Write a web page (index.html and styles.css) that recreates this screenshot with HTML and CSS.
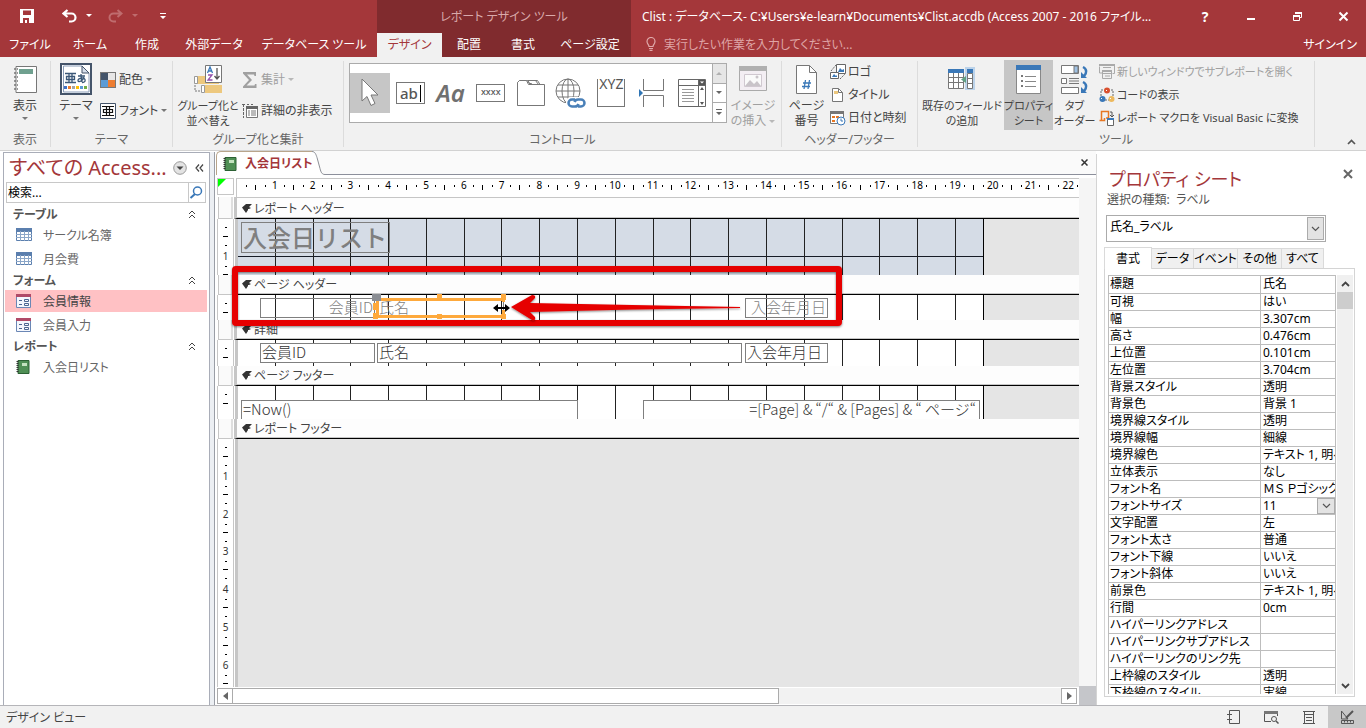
FILE: index.html
```html
<!DOCTYPE html>
<html lang="ja">
<head>
<meta charset="utf-8">
<title>Clist : データベース - Access</title>
<link rel="stylesheet" href="styles.css">
</head>
<body>
<header class="titlebar">
  <div class="title-left">
    <div class="quick">
      <button class="q-save" aria-label="上書き保存"><svg width="14" height="14" viewBox="0 0 14 14"><path d="M0 0h14v14H0z" fill="#fff"/><path d="M3 1.5h8v4.5H3zM3 9h8v5H3z" fill="#a4373a"/><path d="M5 11h2v3H5zM9 9h2v5H9z" fill="#fff"/></svg></button>
      <button class="q-undo" aria-label="元に戻す"><svg width="15" height="14" viewBox="0 0 15 14"><path d="M5.500 1L1.500 4.500l4 3.500M2 4.500h7.500a4 4 0 0 1 0 8H7" fill="none" stroke="#fff" stroke-width="2.200"/></svg></button>
      <svg class="q-caret" width="6" height="3" viewBox="0 0 6 3"><path d="M0 0h6L3 3z" fill="#fff"/></svg>
      <button class="q-redo" aria-label="やり直し"><svg width="15" height="14" viewBox="0 0 15 14"><path d="M9.500 1l4 3.500-4 3.500M13 4.500H5.500a4 4 0 0 0 0 8H8" fill="none" stroke="#bf6c6e" stroke-width="2"/></svg></button>
      <svg class="q-caret2" width="6" height="3" viewBox="0 0 6 3"><path d="M0 0h6L3 3z" fill="#bf6c6e"/></svg>
      <button class="q-more" aria-label="クイック アクセス ツール バーのユーザー設定"><svg width="6" height="6" viewBox="0 0 6 6"><path d="M0 0h6v1H0zM0 3h6L3 6z" fill="#fff"/></svg></button>
    </div>
    <nav class="tabs">
      <button class="t60">ファイル</button><button class="t60">ホーム</button><button class="t54">作成</button><button class="t80">外部データ</button><button class="t120">データベース ツール</button>
    </nav>
  </div>
  <div class="title-context">
    <div class="ctx-name">レポート デザイン ツール</div>
    <nav class="tabs">
      <button class="t65 active">デザイン</button><button class="t54">配置</button><button class="t54">書式</button><button class="t80">ページ設定</button>
    </nav>
  </div>
  <div class="title-right">
    <div class="title-row">
      <span class="caption">Clist : データベース- C:¥Users¥e-learn¥Documents¥Clist.accdb (Access 2007 - 2016 ファイル…</span>
      <div class="win">
        <button aria-label="ヘルプ" class="help">?</button>
        <button aria-label="最小化"><svg width="10" height="10" viewBox="0 0 10 10"><path d="M1 6h8v2H1z" fill="#fff"/></svg></button>
        <button aria-label="元に戻す (縮小)"><svg width="11" height="11" viewBox="0 0 11 11"><path d="M3.500 3V1.500h6v5H8M1.500 4.500h6v5h-6z" fill="none" stroke="#fff"/><path d="M3 1h7v2H3zM1 4h7v2H1z" fill="#fff"/></svg></button>
        <button aria-label="閉じる"><svg width="11" height="11" viewBox="0 0 11 11"><path d="M1.500 1.500l8 8M9.500 1.500l-8 8" stroke="#fff" stroke-width="2"/></svg></button>
      </div>
    </div>
    <div class="tell-row">
      <svg width="10" height="14" viewBox="0 0 10 14"><path d="M3 9.500C3 7.500 1 7 1 4.500a4 4 0 0 1 8 0C9 7 7 7.500 7 9.500zM3 11.500h4M3.500 13.300h3" fill="none" stroke="#e0a9aa" stroke-width="1.200"/></svg>
      <input class="tell" aria-label="操作アシスト" placeholder="実行したい作業を入力してください...">
      <a class="signin" href="#">サインイン</a>
    </div>
  </div>
</header>

<section class="ribbon">
  <div class="group g-view">
    <div class="body">
      <button class="big"><svg width="25" height="29" viewBox="0 0 25 29"><path d="M3 1.500h20.500v26H3z" fill="#fff" stroke="#777"/><path d="M6 4h14v5H6z" fill="#6fa08f"/><path d="M1 4h4M1 8h4M1 12h4M1 16h4M1 20h4M1 24h4" stroke="#777" stroke-width="1.500" stroke-dasharray="2 1"/></svg><span>表示</span><i class="caret"></i></button>
    </div>
    <div class="cap">表示</div>
  </div>
  <div class="group g-theme">
    <div class="body">
      <button class="big theme"><svg width="32" height="32" viewBox="0 0 32 32"><path d="M1 1h30v30H1z" fill="#fff" stroke="#44546a" stroke-width="2"/><path d="M3.500 3h18.500l7 7v19H3.500z" fill="#fff" stroke="#8a9db8"/><path d="M22 3v7h7z" fill="#d6deea" stroke="#44546a"/><g fill="none" stroke="#3b5878" stroke-width="1.300"><path d="M5 10.500h11M5 19.500h11M6.500 13.500h8v3h-8zM9 10.500v9M12 10.500v9"/><path d="M18 13h7M21 11c0 3 0 5 1 8M24 14c-1 4-6 6-6 3.500s6-3.500 7-1-2 3-3 3"/></g><path d="M4 23h3v3H4z" fill="#4472c4"/><path d="M8 23h3v3H8z" fill="#ed7d31"/><path d="M12 23h3v3h-3z" fill="#a5a5a5"/><path d="M16 23h3v3h-3z" fill="#ffc000"/><path d="M20 23h3v3h-3z" fill="#5b9bd5"/><path d="M24 23h3v3h-3z" fill="#70ad47"/></svg><span>テーマ</span><i class="caret"></i></button>
      <div class="stack">
        <button class="small"><svg width="16" height="16" viewBox="0 0 16 16"><path d="M0 0h16v16H0z" fill="#777"/><path d="M1 1h7v7H1z" fill="#44546a"/><path d="M8 1h7v7H8z" fill="#e7e6e6"/><path d="M1 8h7v7H1z" fill="#5b9bd5"/><path d="M8 8h7v7H8z" fill="#ed7d31"/></svg>配色<i class="caret"></i></button>
        <button class="small"><svg width="16" height="16" viewBox="0 0 16 16"><path d="M.5.500h15v15H.5z" fill="#fff" stroke="#44546a"/><path d="M2 3.500h12M2 12.500h12M3.500 6.500h9v3h-9zM6.500 3.500v9M9.500 3.500v9" fill="none" stroke="#111" stroke-width="1.200"/></svg>フォント<i class="caret"></i></button>
      </div>
    </div>
    <div class="cap">テーマ</div>
  </div>
  <div class="group g-sort">
    <div class="body">
      <button class="big two"><svg width="28" height="29" viewBox="0 0 28 29"><path d="M3 11h22v8H3z" fill="#edc87e"/><path d="M.5 11.500h3v7h-3zM7.500 20.500h3v7h-3z" fill="#fff" stroke="#999"/><path d="M11 20h17v8H11z" fill="#edc87e"/><path d="M1 20v6h6" fill="none" stroke="#777" stroke-dasharray="2 1"/><path d="M11.500.500h16v17h-16z" fill="#fff" stroke="#777"/><path d="M13.500 8L16 2l2.500 6M14.500 6h3" fill="none" stroke="#3a78b8" stroke-width="1.300"/><path d="M14 10h4l-4 5h4.500" fill="none" stroke="#9350ad" stroke-width="1.300"/><path d="M23 3v10M20.500 11L23 14l2.500-3" fill="none" stroke="#555" stroke-width="1.300"/></svg><span>グループ化と</span><span>並べ替え</span></button>
      <div class="stack">
        <button class="small dis"><svg width="16" height="16" viewBox="0 0 16 16"><path d="M1 0h13v4h-1.500L12 2.500H5L10 8l-5.500 5.500h8L13 12h1.500v4H1v-1.500L7 8 1 1.500z" fill="#a0a0a0"/></svg>集計<i class="caret"></i></button>
        <button class="small"><svg width="16" height="16" viewBox="0 0 16 16"><path d="M4.500 3.500h11v11h-11z" fill="#fff" stroke="#777"/><path d="M4 3h12v3H4z" fill="#666"/><path d="M6 8h2M6 10h2M6 12h2M9 8h5M9 10h5M9 12h5" stroke="#777"/><path d="M1.500 1v14M0 1.500h3M5 1.500h2M9 1.500h2" stroke="#666" stroke-dasharray="3 1"/></svg>詳細の非表示</button>
      </div>
    </div>
    <div class="cap">グループ化と集計</div>
  </div>
  <div class="group g-ctrl">
    <div class="body">
      <div class="gallery">
        <button class="gi sel" aria-label="選択"><svg width="24" height="32" viewBox="0 0 24 32"><path d="M4 2v22l5-4.500 4 9 4-2-4-8.500h7z" fill="#fff" stroke="#777"/></svg></button>
        <button class="gi" aria-label="テキスト ボックス"><span class="ab">ab<i></i></span></button>
        <button class="gi aa" aria-label="ラベル">Aa</button>
        <button class="gi" aria-label="ボタン"><span class="xxxx">xxxx</span></button>
        <button class="gi" aria-label="タブ コントロール"><svg width="28" height="26" viewBox="0 0 28 26"><path d="M.5 25.500v-23l2-2h8l2 3h2M11 1l1.500 2.500h2M15.500.500h5l2.500 4M11 .5h9" fill="none" stroke="#777"/><path d="M.5 2.500l2-2h7l2 4h16v21H.5z" fill="#fff" stroke="#777"/><path d="M10.500 .5h8l3 4" fill="none" stroke="#777"/></svg></button>
        <button class="gi" aria-label="リンク"><svg width="32" height="32" viewBox="0 0 32 32"><g fill="none" stroke="#777"><circle cx="13" cy="14" r="12"/><ellipse cx="13" cy="14" rx="6" ry="12"/><path d="M13 2v24M1 14h24M3 8h20M3 20h20"/></g><rect x="11" y="20" width="21" height="12" rx="5" fill="#fff"/><path d="M20 22.500h-3a3.500 3.500 0 0 0 0 7h3c2 0 3-1 3.500-2.500M23 29.500h3a3.500 3.500 0 0 0 0-7h-3c-2 0-3 1-3.500 2.500" fill="none" stroke="#4a80b8" stroke-width="2.500"/></svg></button>
        <button class="gi" aria-label="オプション グループ"><span class="xyz">XYZ</span></button>
        <button class="gi" aria-label="改ページの挿入"><svg width="28" height="30" viewBox="0 0 28 30"><path d="M5.500 1v11.500h20V1M5.500 29V17.500h20V29" fill="none" stroke="#777"/><path d="M1 11v8l4-4z" fill="#2f75b5"/></svg></button>
        <button class="gi" aria-label="コンボ ボックス"><svg width="28" height="28" viewBox="0 0 28 28"><path d="M.5.500h27v27H.5z" fill="#fff" stroke="#666"/><path d="M0 6.500h28M20.500 0v28" stroke="#666"/><path d="M21 1h6v5h-6z" fill="#555"/><path d="M22 2.500h4l-2 2z" fill="#fff"/><path d="M22 11h4l-2-3zM22 23h4l-2 3z" fill="#555"/><path d="M4 10.500h12M4 13.500h12M4 16.500h12M4 19.500h12M4 22.500h12" stroke="#999"/></svg></button>
        <div class="gscroll">
          <button aria-label="上へ" class="off"><svg width="6" height="4"><path d="M0 4h6L3 1z" fill="#b0b0b0"/></svg></button>
          <button aria-label="下へ"><svg width="6" height="4"><path d="M0 0h6L3 3z" fill="#666"/></svg></button>
          <button aria-label="その他"><svg width="6" height="7"><path d="M0 0h6v1H0zM0 3h6L3 6z" fill="#666"/></svg></button>
        </div>
      </div>
      <button class="big two dis img"><svg width="28" height="25" viewBox="0 0 28 25"><path d="M.5.500h27v24H.5z" fill="#f3eef3" stroke="#aaa"/><path d="M0 0h28v5H0z" fill="#b0b0b0"/><path d="M5.500 8.500h17v12h-17z" fill="#fafafa" stroke="#d0c8d0"/><path d="M6 20l5-6 4 4 3-3 4 5z" fill="#c9c4c9"/><circle cx="18" cy="11" r="1.500" fill="#c9c4c9"/></svg><span>イメージ</span><span>の挿入 <i class="caret"></i></span></button>
    </div>
    <div class="cap">コントロール</div>
  </div>
  <div class="group g-head">
    <div class="body">
      <button class="big two"><svg width="21" height="29" viewBox="0 0 21 29"><path d="M.5.500h13l7 7v21H.5z" fill="#fff" stroke="#777"/><path d="M13.500.500v7h7" fill="none" stroke="#777"/><path d="M9.500 15l-1.500 9M13.500 15L12 24M7 18h8M6 21.500h8" stroke="#3a78b8" stroke-width="1.300"/></svg><span>ページ</span><span>番号</span></button>
      <div class="stack three">
        <button class="small"><svg width="16" height="16" viewBox="0 0 16 16"><path d="M6.500.500h9v9h-9z" fill="#fff" stroke="#666"/><path d="M8 8l2-4 2 2 2-1v3z" fill="#3a78b8"/><path d="M.5 8.500h8v6h-8z" fill="#fff" stroke="#666"/><path d="M2 13l2-3 2 2 1-1v2z" fill="#3a78b8"/><path d="M1 7l5-6M10 15l5-5" stroke="#666" stroke-dasharray="2 1"/></svg>ロゴ</button>
        <button class="small"><svg width="16" height="16" viewBox="0 0 16 16"><path d="M2.500 1.500h6l4 4v9h-10z" fill="#fff" stroke="#777"/><path d="M8.500 1.500v4h4" fill="none" stroke="#777"/><path d="M4 4h4v3H4z" fill="#edc87e"/></svg>タイトル</button>
        <button class="small"><svg width="16" height="16" viewBox="0 0 16 16"><path d="M.5 1.500h13v12H.5z" fill="#fff" stroke="#777"/><path d="M0 1h14v3H0z" fill="#777"/><path d="M2 6h3v2H2zM6 6h3v2H6zM2 10h3v2H2z" fill="#e87722"/><circle cx="11" cy="11" r="4" fill="#fff" stroke="#3a78b8"/><path d="M11 8.500V11h2" fill="none" stroke="#3a78b8"/></svg>日付と時刻</button>
      </div>
    </div>
    <div class="cap">ヘッダー/フッター</div>
  </div>
  <div class="group g-tool">
    <div class="body">
      <button class="big two field"><svg width="28" height="29" viewBox="0 0 28 29"><path d="M17 2h10v23H17z" fill="#bcd3ea"/><path d="M.5 4.500h15v19H.5z" fill="#fff" stroke="#777"/><path d="M0 4h16v4H0zM19 4h6v4h-6z" fill="#3a78b8"/><path d="M0 12.500h16M0 17.500h16M5.500 8v16M10.500 8v16" stroke="#777"/><path d="M19.500 8.500h5v15h-5zM19 13.500h6M19 18.500h6" fill="#fff" stroke="#777"/><path d="M18 11v7l-5-3.500z" fill="#5fa084"/></svg><span>既存のフィールド</span><span>の追加</span></button>
      <button class="big two pressed"><svg width="25" height="29" viewBox="0 0 25 29"><path d="M.5.500h24v28H.5z" fill="#fff" stroke="#888"/><path d="M0 0h25v5H0z" fill="#3a78b8"/><path d="M9 11.500h11M9 16.500h11M9 21.500h11" stroke="#888"/><path d="M5 10h2v2H5zM5 15h2v2H5zM5 20h2v2H5z" fill="#777"/></svg><span>プロパティ</span><span>シート</span></button>
      <button class="big two order"><svg width="28" height="29" viewBox="0 0 28 29"><path d="M.5.500h17v8H.5zM.5 13.500h5v5h-5zM.5 22.500h17v6H.5z" fill="#fff" stroke="#777"/><path d="M13 1h4v7h-4z" fill="#9fc1e3" stroke="#777"/><path d="M8 13.500h10M8 16h10M8 18.500h10" stroke="#777"/><path d="M22 2c4 2 4 6 1 9M22 17c4 2 4 6 1 9" fill="none" stroke="#3a78b8" stroke-width="2.500"/><path d="M20 7v6h6zM20 22v6h6z" fill="#3a78b8"/></svg><span>タブ</span><span>オーダー</span></button>
      <div class="stack three">
        <button class="small dis"><svg width="16" height="16" viewBox="0 0 16 16"><path d="M.5 2.500v-2h15v9h-2M.5 3v6H3M3.500 6.500h9v8h-9zM3 9.500h10M6 12h5M4 3.500h8" fill="none" stroke="#aaa"/><path d="M0 0h16v2H0zM3 6h10v2H3z" fill="#aaa"/></svg>新しいウィンドウでサブレポートを開く</button>
        <button class="small"><svg width="16" height="16" viewBox="0 0 16 16"><path d="M4 3H2v8M12 3h2v6M6 13h4" fill="none" stroke="#666" stroke-dasharray="2 1"/><circle cx="8" cy="3.500" r="3" fill="#d9502e"/><circle cx="3.500" cy="12" r="3" fill="#3a78b8"/><circle cx="12.500" cy="12" r="3" fill="#edb95e"/><path d="M7 3h1v1H7zM2 11h1v1H2zM11 11h1v1h-1z" fill="#fff"/></svg>コードの表示</button>
        <button class="small"><svg width="16" height="16" viewBox="0 0 16 16"><path d="M2.500 10V1.500h7V8H7M.5 10.500h5V8" fill="none" stroke="#e87722" stroke-width="1.500"/><path d="M8.500 8.500h6v7h-6z" fill="#fff" stroke="#666"/><path d="M8 8h7v2H8z" fill="#3a78b8"/><path d="M11 2h2v5M11 5l2 2 2-2" fill="none" stroke="#555"/></svg>レポート マクロを Visual Basic に変換</button>
      </div>
    </div>
    <div class="cap">ツール</div>
  </div>
  <button class="collapse" aria-label="リボンを折りたたむ"><svg width="9" height="6" viewBox="0 0 9 6"><path d="M1 5l3.500-3.500L8 5" fill="none" stroke="#555" stroke-width="1.700"/></svg></button>
</section>

<main class="work">
  <aside class="nav">
    <div class="nav-head"><h2>すべての Access...</h2>
      <button aria-label="オブジェクトの種類"><svg width="14" height="14" viewBox="0 0 14 14"><circle cx="7" cy="7" r="6.300" fill="#e3e3e3" stroke="#999"/><path d="M3.500 5.500h7L7 9z" fill="#444"/></svg></button>
      <button aria-label="ナビゲーション ウィンドウを閉じる"><svg width="9" height="8" viewBox="0 0 9 8"><path d="M4 .5L1 4l3 3.500M8 .5L5 4l3 3.500" fill="none" stroke="#444" stroke-width="1.200"/></svg></button>
    </div>
    <div class="search"><input aria-label="検索" value="検索..."><button aria-label="検索の実行"><svg width="14" height="13" viewBox="0 0 14 13"><circle cx="8.500" cy="5" r="4" fill="#fff" stroke="#3a78b8" stroke-width="1.500"/><path d="M6 8l-4.500 4" stroke="#3a78b8" stroke-width="2"/></svg></button></div>
    <div class="ngroup"><button class="nhead">テーブル<svg width="8" height="9" viewBox="0 0 8 9"><path d="M1 4l3-3 3 3M1 8l3-3 3 3" fill="none" stroke="#444"/></svg></button>
      <a class="nitem" href="#"><svg width="16" height="14" viewBox="0 0 16 14"><path d="M.5.500h15v12H.5z" fill="#fff" stroke="#5b7fae"/><path d="M0 0h16v4H0z" fill="#5b7fae"/><path d="M0 6.500h16M0 9.500h16M4.500 3v10M8.500 3v10M12.500 3v10" stroke="#8ba6c8"/></svg>サークル名簿</a>
      <a class="nitem" href="#"><svg width="16" height="14" viewBox="0 0 16 14"><path d="M.5.500h15v12H.5z" fill="#fff" stroke="#5b7fae"/><path d="M0 0h16v4H0z" fill="#5b7fae"/><path d="M0 6.500h16M0 9.500h16M4.500 3v10M8.500 3v10M12.500 3v10" stroke="#8ba6c8"/></svg>月会費</a></div>
    <div class="ngroup"><button class="nhead">フォーム<svg width="8" height="9" viewBox="0 0 8 9"><path d="M1 4l3-3 3 3M1 8l3-3 3 3" fill="none" stroke="#444"/></svg></button>
      <a class="nitem cur" href="#"><svg width="16" height="14" viewBox="0 0 16 14"><path d="M.5.500h14v13H.5z" fill="#f4f7fd" stroke="#6b87b5"/><path d="M0 0h15v3H0z" fill="#b04a68"/><path d="M3 6.500h3M3 10.500h3M8.500 5.500h4v2h-4zM8.500 9.500h4v2h-4z" fill="none" stroke="#4c6690"/></svg>会員情報</a>
      <a class="nitem" href="#"><svg width="16" height="14" viewBox="0 0 16 14"><path d="M.5.500h14v13H.5z" fill="#f4f7fd" stroke="#6b87b5"/><path d="M0 0h15v3H0z" fill="#b04a68"/><path d="M3 6.500h3M3 10.500h3M8.500 5.500h4v2h-4zM8.500 9.500h4v2h-4z" fill="none" stroke="#4c6690"/></svg>会員入力</a></div>
    <div class="ngroup"><button class="nhead">レポート<svg width="8" height="9" viewBox="0 0 8 9"><path d="M1 4l3-3 3 3M1 8l3-3 3 3" fill="none" stroke="#444"/></svg></button>
      <a class="nitem" href="#"><svg width="16" height="14" viewBox="0 0 16 14"><path d="M2 .5h11v13H2z" fill="#4f8f55" stroke="#2c6134"/><path d="M6 3h5v3H6z" fill="#c4e3c0"/><path d="M1.500 1v12" stroke="#333" stroke-width="2" stroke-dasharray="1 1"/></svg>入会日リスト</a></div>
  </aside>
  <div class="splitter"></div>

  <section class="doc">
    <div class="doctabs">
      <button class="doctab"><svg width="14" height="14" viewBox="0 0 14 14"><path d="M2 .5h11v13H2z" fill="#4f8f55" stroke="#2c6134"/><path d="M6 3h5v3H6z" fill="#c4e3c0"/><path d="M1.500 1v12" stroke="#333" stroke-width="2" stroke-dasharray="1 1"/></svg>入会日リスト</button>
      <svg class="slope" width="13" height="24" viewBox="0 0 13 24"><path d="M0 24V.5c3 0 4 3 5 6l3 11c1 4 2 6 5 6V24z" fill="#fff"/><path d="M0 .5c3 0 4 3 5 6l3 11c1 4 2 6 5 6" fill="none" stroke="#8c8f96"/></svg>
      <div class="tabfill"><button aria-label="閉じる"><svg width="7" height="7" viewBox="0 0 7 7"><path d="M.5.500l6 6M6.500.500l-6 6" stroke="#333" stroke-width="1.500"/></svg></button></div>
    </div>
    <div class="design">
      <div class="canvas">
        <div class="rulerrow"><div class="corner"><svg width="8" height="8"><path d="M0 0h8L0 8z" fill="#0f0"/></svg></div>
          <div class="hruler"><span class="half"></span><span>1</span><span>2</span><span>3</span><span>4</span><span>5</span><span>6</span><span>7</span><span>8</span><span>9</span><span>10</span><span>11</span><span>12</span><span>13</span><span>14</span><span>15</span><span>16</span><span>17</span><span>18</span><span>19</span><span>20</span><span>21</span><span>22</span></div></div>

        <div class="band first"><div class="vhead"></div><h3><svg width="10" height="9" viewBox="0 0 10 9"><path d="M0 3.500L4 0h6L7 3l2 1-2 1H6v1L4 9z" fill="#333"/></svg>レポート ヘッダー</h3></div>
        <div class="sec s1"><div class="vr"><b></b><span>1</span><span></span></div>
          <div class="area"><div class="sheet"><i></i><i></i><i></i><i></i><i></i><i></i><i></i><i></i><i></i><i></i><i></i><i></i><i></i><i></i><i></i><i></i><i></i><i></i><i></i>
            <div class="fld f-title">入会日リスト</div></div></div></div>

        <div class="band"><div class="vhead"></div><h3><svg width="10" height="9" viewBox="0 0 10 9"><path d="M0 3.500L4 0h6L7 3l2 1-2 1H6v1L4 9z" fill="#333"/></svg>ページ ヘッダー</h3></div>
        <div class="sec s2"><div class="vr"><b></b></div>
          <div class="area"><div class="sheet"><i></i><i></i><i></i><i></i><i></i><i></i><i></i><i></i><i></i><i></i><i></i><i></i><i></i><i></i><i></i><i></i><i></i><i></i><i></i>
            <div class="fld lab c1 r">会員ID</div><div class="fld lab c2">氏名</div><div class="fld lab c3 r">入会年月日</div></div></div></div>

        <div class="band"><div class="vhead"></div><h3><svg width="10" height="9" viewBox="0 0 10 9"><path d="M0 3.500L4 0h6L7 3l2 1-2 1H6v1L4 9z" fill="#333"/></svg>詳細</h3></div>
        <div class="sec s3"><div class="vr"><b></b></div>
          <div class="area"><div class="sheet"><i></i><i></i><i></i><i></i><i></i><i></i><i></i><i></i><i></i><i></i><i></i><i></i><i></i><i></i><i></i><i></i><i></i><i></i><i></i>
            <div class="fld box c1">会員ID</div><div class="fld box c2 wide">氏名</div><div class="fld box c3">入会年月日</div></div></div></div>

        <div class="band"><div class="vhead"></div><h3><svg width="10" height="9" viewBox="0 0 10 9"><path d="M0 3.500L4 0h6L7 3l2 1-2 1H6v1L4 9z" fill="#333"/></svg>ページ フッター</h3></div>
        <div class="sec s4"><div class="vr"><b></b></div>
          <div class="area"><div class="sheet"><i></i><i></i><i></i><i></i><i></i><i></i><i></i><i></i><i></i><i></i><i></i><i></i><i></i><i></i><i></i><i></i><i></i><i></i><i></i>
            <div class="fld box now">=Now()</div><div class="fld box page r">=[Page] &amp; “/“ &amp; [Pages] &amp; “ ページ“</div></div></div></div>

        <div class="band"><div class="vhead"></div><h3><svg width="10" height="9" viewBox="0 0 10 9"><path d="M0 3.500L4 0h6L7 3l2 1-2 1H6v1L4 9z" fill="#333"/></svg>レポート フッター</h3></div>
        <div class="sec s5"><div class="vr"><b></b><span>1</span><span>2</span><span>3</span><span>4</span><span>5</span><span>6</span></div><div class="area"></div></div>

        <div class="hscroll"><button aria-label="左へ"><svg width="5" height="8"><path d="M5 0v8L0 4z" fill="#666"/></svg></button><div class="track"><div class="thumb"></div></div><button aria-label="右へ"><svg width="5" height="8"><path d="M0 0v8l5-4z" fill="#666"/></svg></button></div>
      </div>
      <div class="vcol"><div></div></div>
      <svg class="overlay" width="640" height="80" viewBox="220 256 640 80">
        <defs><filter id="sh" x="-5%" y="-30%" width="110%" height="160%"><feDropShadow dx="0" dy="1" stdDeviation="1" flood-opacity=".5"/></filter></defs>
        <path d="M378 299.500h126M378 316.500h126" stroke="#fea93c" stroke-width="3"/>
        <path d="M377.500 298v20M503.500 298v4M503.500 310v7" stroke="#fea93c" stroke-width="3"/>
        <path d="M437 294h5v5h-5zM501 294h5v6h-5zM501 314h5v5h-5zM437 314h5v5h-5zM373 313h5v6h-5zM373 303h6v7h-6z" fill="#fea93c"/>
        <path d="M372 294h9v7h-9z" fill="#8b8e94"/>
        <rect x="235" y="269" width="604" height="54" rx="1" fill="none" stroke="#e60000" stroke-width="6" stroke-linejoin="round" filter="url(#sh)"/>
        <path d="M511 307l21-12q4 0 3 3l-5 5q100 2 210 4v1q-110 1-210 4l5 5q1 4-3 3z" fill="#e60000" filter="url(#sh)"/>
        <path d="M493 308l5-4v3h7v-3l5 4-5 4v-3h-7v3z" fill="#000"/>
      </svg>
    </div>
  </section>

  <aside class="props">
    <div class="phead"><div><h2>プロパティ シート</h2><p>選択の種類:&nbsp; ラベル</p></div><button aria-label="閉じる"><svg width="10" height="10" viewBox="0 0 10 10"><path d="M1 1l8 8M9 1L1 9" stroke="#666" stroke-width="2"/></svg></button></div>
    <div class="combo"><select aria-label="選択の種類"><option>氏名_ラベル</option></select><span class="drop"><svg width="9" height="6" viewBox="0 0 9 6"><path d="M1 1l3.500 3.500L8 1" fill="none" stroke="#555" stroke-width="1.200"/></svg></span></div>
    <div class="ptabs"><button class="on">書式</button><button class="w42">データ</button><button class="w44">イベント</button><button class="w44">その他</button><button class="w42">すべて</button></div>
    <div class="pbox">
      <div class="pscroll"><table>
        <tbody>
        <tr><th scope="row">標題</th><td>氏名</td></tr>
        <tr><th scope="row">可視</th><td>はい</td></tr>
        <tr><th scope="row">幅</th><td>3.307cm</td></tr>
        <tr><th scope="row">高さ</th><td>0.476cm</td></tr>
        <tr><th scope="row">上位置</th><td>0.101cm</td></tr>
        <tr><th scope="row">左位置</th><td>3.704cm</td></tr>
        <tr><th scope="row">背景スタイル</th><td>透明</td></tr>
        <tr><th scope="row">背景色</th><td>背景 1</td></tr>
        <tr><th scope="row">境界線スタイル</th><td>透明</td></tr>
        <tr><th scope="row">境界線幅</th><td>細線</td></tr>
        <tr><th scope="row">境界線色</th><td>テキスト 1, 明るい</td></tr>
        <tr><th scope="row">立体表示</th><td>なし</td></tr>
        <tr><th scope="row">フォント名</th><td>ＭＳ Ｐゴシック</td></tr>
        <tr><th scope="row" id="fs">フォントサイズ</th><td class="sized"><div class="combo mini"><select aria-labelledby="fs"><option>11</option></select><span class="drop"><svg width="9" height="6" viewBox="0 0 9 6"><path d="M1 1l3.500 3.500L8 1" fill="none" stroke="#555" stroke-width="1.200"/></svg></span></div></td></tr>
        <tr><th scope="row">文字配置</th><td>左</td></tr>
        <tr><th scope="row">フォント太さ</th><td>普通</td></tr>
        <tr><th scope="row">フォント下線</th><td>いいえ</td></tr>
        <tr><th scope="row">フォント斜体</th><td>いいえ</td></tr>
        <tr><th scope="row">前景色</th><td>テキスト 1, 明るい</td></tr>
        <tr><th scope="row">行間</th><td>0cm</td></tr>
        <tr><th scope="row">ハイパーリンクアドレス</th><td></td></tr>
        <tr><th scope="row">ハイパーリンクサブアドレス</th><td></td></tr>
        <tr><th scope="row">ハイパーリンクのリンク先</th><td></td></tr>
        <tr><th scope="row">上枠線のスタイル</th><td>透明</td></tr>
        <tr><th scope="row">下枠線のスタイル</th><td>実線</td></tr>
        </tbody></table></div>
      <div class="vscroll"><button aria-label="上へ"><svg width="9" height="6" viewBox="0 0 9 6"><path d="M1 5l3.500-3.500L8 5" fill="none" stroke="#444" stroke-width="1.800"/></svg></button><div class="vthumb"></div><button class="down" aria-label="下へ"><svg width="9" height="6" viewBox="0 0 9 6"><path d="M1 1l3.500 3.500L8 1" fill="none" stroke="#444" stroke-width="1.800"/></svg></button></div>
    </div>
  </aside>
</main>

<footer class="status">
  <span>デザイン ビュー</span>
  <div class="views">
    <button aria-label="レポート ビュー"><svg width="14" height="14" viewBox="0 0 14 14"><path d="M3.500.500h10v13h-10z" fill="none" stroke="#555"/><path d="M1 4.500h5M1 9.500h5M3.500 3v3M3.500 8v3" stroke="#555"/></svg></button>
    <button aria-label="印刷プレビュー"><svg width="15" height="14" viewBox="0 0 15 14"><path d="M7 11.500H.5v-10h13V6" fill="none" stroke="#555"/><path d="M0 1h14v3H0z" fill="#777"/><circle cx="10" cy="9" r="2.500" fill="none" stroke="#555"/><path d="M12 11l2.500 2.500" stroke="#555" stroke-width="1.500"/></svg></button>
    <button aria-label="レイアウト ビュー"><svg width="12" height="13" viewBox="0 0 12 13"><path d="M0 .5h12M0 12.500h12M1.500 0v13M10.500 0v13M1 3.500h10M3 6.500h6M3 9.500h6" fill="none" stroke="#555"/></svg></button>
    <button class="on" aria-label="デザイン ビュー"><svg width="15" height="14" viewBox="0 0 15 14"><path d="M1.500 1v8H8z" fill="none" stroke="#555"/><path d="M6 8l7-7" stroke="#555" stroke-width="2"/><path d="M1.500 10.500h12v3h-12zM4.500 11v1.500M7.500 11v1.500M10.500 11v1.500" fill="none" stroke="#555"/></svg></button>
  </div>
</footer>
</body>
</html>
```

FILE: styles.css
```css
* { box-sizing: border-box; }
body {
  margin: 0; height: 100vh; display: flex; flex-direction: column; overflow: hidden;
  font: 12px/15px "Noto Sans", "Noto Sans CJK JP", sans-serif;
  font-feature-settings: "palt"; color: #444; background: #f1f1f1;
}
button, input, select { font: inherit; color: inherit; font-feature-settings: inherit; border: 0; padding: 0; margin: 0; background: none; }
button { white-space: nowrap; }
svg { display: block; flex: none; }
h2, h3, p { margin: 0; font-weight: 400; }
a { color: inherit; text-decoration: none; }

/* title bar */
.titlebar { display: flex; height: 57px; flex: none; background: #a4373a; color: #fff; }
.title-left { width: 377px; flex: none; }
.title-context { width: 254px; flex: none; background: #802b2e; }
.title-right { flex: 1; min-width: 0; }
.quick, .ctx-name { height: 33px; display: flex; align-items: center; }
.quick { padding: 4px 0 6px 20px; }
.q-undo { margin-left: 28px; }
.q-caret { margin-left: 9px; }
.q-redo { margin-left: 16px; }
.q-caret2 { margin-left: 9px; }
.q-more { margin-left: 22px; }
.ctx-name { justify-content: center; color: #d9a9aa; }
.tabs { display: flex; height: 24px; }
.tabs button { height: 24px; padding-bottom: 2px; }
.t54 { width: 54px; } .t60 { width: 60px; } .t65 { width: 65px; } .t80 { width: 80px; } .t120 { width: 120px; }
.tabs .active { background: #f1f1f1; color: #a4373a; }
.title-row { display: flex; height: 33px; align-items: center; padding-left: 11px; }
.caption { flex: 1; min-width: 0; white-space: nowrap; overflow: hidden; text-overflow: ellipsis; }
.win { display: flex; }
.win button { width: 46px; height: 33px; display: flex; align-items: center; justify-content: center; }
.help { font-size: 14px; font-weight: 700; }
.tell-row { display: flex; height: 24px; align-items: center; padding: 0 9px 2px 15px; gap: 8px; }
.tell { flex: 1; min-width: 0; }
.tell::placeholder { color: #dfa5a6; opacity: 1; }

/* ribbon */
.ribbon { display: flex; flex: none; height: 94px; background: #f1f1f1; border-bottom: 1px solid #d2d2d2; }
.group { display: flex; flex-direction: column; margin: 4px 0 3px; border-right: 1px solid #dcdcdc; flex: none; }
.body { display: flex; height: 71px; }
.cap { height: 15px; text-align: center; color: #666; white-space: nowrap; }
.g-view { width: 51px; } .g-theme { width: 122px; } .g-sort { width: 171px; }
.g-ctrl { width: 438px; } .g-head { width: 136px; } .g-tool { width: 397px; }
.big { display: flex; flex-direction: column; align-items: center; width: 51px; padding-top: 4px; }
.big svg { margin-bottom: 4px; }
.big.theme { width: 32px; margin-left: 9px; padding-top: 2px; }
.big.theme svg { margin-bottom: 3px; }
.big.two { width: 60px; margin-left: 5px; }
.g-sort .big.two { font-size: 11px; }
.caret { display: inline-block; border: 3px solid transparent; border-top-color: #777; border-bottom: 0; vertical-align: middle; }
.big > .caret { margin-top: 4px; }
.dis { color: #a0a0a0; } .dis .caret { border-top-color: #b8b8b8; }
.stack { display: flex; flex-direction: column; gap: 16px; padding: 11px 0 0 8px; }
.g-sort .stack { padding-left: 4px; }
.small { display: flex; align-items: center; gap: 3px; height: 15px; }
.stack.three { gap: 8px; padding-top: 3px; padding-left: 5px; }
.stack.three .small { gap: 2px; }
.gallery { display: flex; align-items: center; width: 378px; height: 60px; margin: 2px 0 0 5px; background: #fff; border: 1px solid #ababab; }
.gi { width: 40px; height: 40px; display: flex; align-items: center; justify-content: center; flex: 1; }
.gi.sel { background: #c6c6c6; }
.ab { display: flex; width: 29px; height: 22px; border: 1px solid #777; font-size: 15px; line-height: 20px; font-weight: 500; color: #555; justify-content: center; align-items: center; }
.ab i { width: 1px; height: 17px; background: #000; margin-left: 2px; }
.aa { font: italic 600 24px/30px "Noto Sans", sans-serif; color: #707070; }
.xxxx { width: 29px; height: 18px; border: 1px solid #777; font: 500 9px/14px "Noto Sans", sans-serif; color: #555; }
.xyz { width: 28px; height: 28px; border: 1px solid #777; border-top: 0; font-size: 14px; line-height: 10px; color: #555; }
.gscroll { width: 14px; height: 58px; border-left: 1px solid #ababab; display: flex; flex-direction: column; }
.gscroll button { flex: 1; display: flex; align-items: center; justify-content: center; }
.gscroll button + button { border-top: 1px solid #ababab; }
.gscroll .off { background: #e6e6e6; }
.big.img { width: 50px; margin-left: 1px; padding-top: 5px; }
.big.img svg { margin-bottom: 7px; }
.g-head .big { width: 41px; margin-left: 4px; }
.g-head .stack { padding-left: 3px; }
.g-tool .body { font-size: 11px; }
.g-tool .big.field { width: 82px; margin-left: 3px; }
.g-tool .pressed { width: 49px; height: 70px; margin: -1px 0 0 1px; padding-top: 5px; background: #c6c6c6; }
.g-tool .order { width: 43px; margin-left: 0; }
.g-tool .stack { padding-left: 3px; }
.collapse { margin: auto 10px 5px auto; }

/* work area */
.work { display: flex; flex: 1; min-height: 0; border-bottom: 1px solid #b5b5b9; background: #fff; }
.nav { width: 207px; flex: none; margin: 1px 0 0 3px; border: solid #a9adb8; border-width: 1px 1px 0; padding: 0 2px 0 1px; }
.splitter { width: 5px; flex: none; background: #eceff3; border-right: 1px solid #9a9ea6; margin-top: 1px; }
.nav-head { display: flex; align-items: center; height: 29px; padding: 0 3px 0 4px; gap: 8px; }
.nav-head h2 { flex: 1; min-width: 0; font-size: 20px; line-height: 29px; color: #a4373a; white-space: nowrap; }
.search { display: flex; height: 21px; margin: 0 1px 1px; border: 1px solid #c8c8c8; color: #000; }
.search input { flex: 1; min-width: 0; padding-left: 1px; }
.search button { width: 17px; border-left: 1px solid #c8c8c8; }
.nhead { display: flex; align-items: center; justify-content: space-between; width: 100%; height: 20px; padding: 0 11px 0 8px; font-weight: 700; color: #555; }
.nitem { display: flex; align-items: center; height: 22px; padding-left: 11px; gap: 11px; color: #666; }
.nitem + .nitem { margin-top: 2px; }
.nitem.cur { background: #ffc1c4; color: #444; }

/* document */
.doc { flex: 1; min-width: 0; display: flex; flex-direction: column; background: #fff; padding-left: 1px; }
.doctabs { display: flex; height: 24px; flex: none; background: #fafafa; }
.doctab { display: flex; align-items: center; gap: 8px; width: 96px; padding-left: 6px; background: #fff; border: solid #b8a58c; border-width: 1px 0 0 1px; border-radius: 5px 0 0; font-weight: 700; color: #a4373a; }
.tabfill { flex: 1; border-bottom: 1px solid #8c8f9b; display: flex; justify-content: flex-end; align-items: center; padding-right: 8px; }
.design { flex: 1; min-height: 0; display: flex; position: relative; padding-top: 3px; }
.canvas { flex: 1; min-width: 0; display: flex; flex-direction: column; padding-left: 1px; overflow: hidden; }
.vcol { width: 17px; flex: none; background: #f5f5f5; display: flex; flex-direction: column; justify-content: flex-end; }
.vcol div { height: 19px; background: #c5c6ca; }
.rulerrow { display: flex; height: 19px; flex: none; }
.corner { width: 17px; height: 17px; border: 1px solid #c6c6c6; flex: none; }
.hruler { flex: 1; min-width: 0; margin-left: 2px; display: flex; overflow: hidden; border: solid #c6c6c6; border-width: 1px 0 0 1px; font-size: 10px; line-height: 13px; color: #000; }
.hruler span { width: 1cm; flex: none; display: flex; justify-content: space-between; padding: 0 9px; background: linear-gradient(#000, #000) right 6px / 1px 5px no-repeat; }
.hruler span::before, .hruler span::after { content: ""; width: 1px; height: 2px; margin-top: 6px; background: #000; }
.hruler .half { width: 19px; padding: 0 0 0 9px; }
.hruler .half::after { display: none; }
.band { display: flex; height: 20px; flex: none; }
.band.first { height: 22px; }
.vhead { width: 15px; flex: none; margin-left: 1px; border: solid #c6c6c6; border-width: 0 2px 1px 1px; border-right-color: #dedede; background: #fafafa; }
.band h3 { flex: 1; display: flex; align-items: center; gap: 2px; margin-left: 1px; padding-left: 5px; font-size: 12px; line-height: 15px; background: #fdfdfd; border: solid #c6c6c6; border-width: 0 0 0 3px; border-bottom: 1px solid #000; box-shadow: inset 0 -1px #c6c6c6; white-space: nowrap; }
.band.first h3 { border-top: 1px solid #c6c6c6; }
.sec { display: flex; flex: none; }
.vr { width: 17px; flex: none; overflow: hidden; border: solid #c6c6c6; border-width: 0 1px; font-size: 10px; line-height: 12px; color: #333; }
.vr b, .vr span { display: flex; flex-direction: column; align-items: center; height: 1cm; justify-content: space-between; padding: 8px 0; background: linear-gradient(#000, #000) 5px bottom / 5px 1px no-repeat; }
.vr b { height: 18px; justify-content: flex-start; }
.vr b::before, .vr span::before, .vr span::after { content: ""; width: 2px; height: 1px; background: #000; flex: none; }
.area { flex: 1; min-width: 0; margin-left: 1px; border-left: 3px solid #c6c6c6; background: #e5e5e5; overflow: hidden; }
.sheet { position: relative; display: flex; width: 746px; height: 100%; background: #fff; border-right: 1px solid #000; overflow: hidden; }
.sheet > i { width: 1cm; flex: none; border-right: 1px solid #222; }
.s1 { height: 56px; } .s2 { height: 25px; } .s3 { height: 26px; } .s4 { height: 33px; } .s5 { flex: 1; min-height: 0; }
.s1 .sheet { background: linear-gradient(#161b26, #161b26) 0 37px / 100% 1px no-repeat #d5dce6; }

/* report controls sit freely on the sheet */
.fld { position: absolute; border: 1px solid #7f7f7f; font: 300 15px/16px "Noto Sans CJK JP", sans-serif; padding: 0 1px; white-space: nowrap; color: #333; height: 20px; top: 3px; }
.lab { color: #7f7f7f; }
.box { background: #fff; }
.r { text-align: right; }
.f-title { left: 3px; width: 149px; height: 31px; font-size: 24px; font-weight: 500; line-height: 27px; color: #7f7f7f; }
.c1 { left: 22px; width: 115px; }
.c2 { left: 139px; width: 127px; }
.c2.wide { width: 365px; }
.c3 { left: 507px; width: 83px; }
.now, .page { top: 14px; left: 3px; width: 337px; }
.page { left: 405px; padding-right: 3px; }
.overlay { position: absolute; left: 4px; top: 81px; pointer-events: none; }

.hscroll { display: flex; flex: none; height: 17px; margin: 1px 2px 0 0; padding-bottom: 1px; }
.hscroll button { width: 16px; border: 1px solid #ababab; display: flex; align-items: center; justify-content: center; }
.track { flex: 1; background: #f2f2f2; }
.thumb { width: 66%; height: 16px; background: #fff; border: 1px solid #ababab; border-left: 0; }

/* property sheet */
.props { width: 270px; flex: none; display: flex; flex-direction: column; border-left: 1px solid #d4d4d4; margin-top: 3px; padding: 12px 11px 8px 7px; }
.phead { display: flex; justify-content: space-between; align-items: flex-start; padding: 0 2px 0 3px; height: 49px; flex: none; }
.phead h2 { font-size: 18px; line-height: 26px; color: #a4373a; padding-left: 2px; }
.phead p { line-height: 15px; color: #555; }
.phead button { margin-top: 3px; }
.combo { display: grid; grid-template-columns: 1fr 18px; align-items: stretch; color: #000; }
.combo select { grid-area: 1 / 1 / 2 / 3; appearance: none; padding: 0 3px 4px; text-align: left; }
.combo .drop { grid-area: 1 / 2; display: flex; align-items: center; justify-content: center; border: 1px solid #ababab; background: #e3e3e3; pointer-events: none; margin: 1px; margin-left: 0; }
.props > .combo { height: 27px; width: 220px; margin-left: 2px; border: 1px solid #ababab; flex: none; }
.ptabs { display: flex; align-items: flex-end; height: 22px; flex: none; margin-top: 4px; color: #000; }
.ptabs button { height: 20px; background: #f0f0f0; border: 1px solid #dadada; border-left: 0; border-bottom: 0; }
.ptabs .on { width: 48px; height: 22px; background: #fff; border-left: 1px solid #dadada; margin-bottom: -1px; position: relative; z-index: 1; }
.w42 { width: 42px; } .w44 { width: 44px; }
.pbox { flex: 1; min-height: 0; display: flex; border: 1px solid #d4d4d4; padding: 6px 1px 2px 3px; }
.pscroll { flex: 1; min-width: 0; overflow: hidden; border: solid #bdbdbd; border-width: 1px 0 0; }
table { width: 100%; table-layout: fixed; border-collapse: collapse; color: #000; }
th, td { height: 17px; line-height: 16px; padding: 0 0 0 2px; font-weight: 400; text-align: left; border: 1px solid #bdbdbd; border-top: 0; white-space: nowrap; overflow: hidden; }
th { width: 152px; padding-left: 1px; }
.mini { height: 16px; }
.mini select { padding: 0; }
.mini .drop { margin: 0; }
.vscroll { width: 16px; flex: none; background: #f0f0f0; margin-left: 1px; display: flex; flex-direction: column; }
.vscroll button { height: 17px; display: flex; align-items: center; justify-content: center; flex: none; }
.vthumb { height: 17px; background: #cdcdcd; }
.vscroll .down { margin-top: auto; }

/* status bar */
.status { display: flex; justify-content: space-between; align-items: center; height: 22px; flex: none; padding-left: 6px; }
.views { display: flex; height: 22px; }
.views button { width: 38px; display: flex; align-items: center; justify-content: center; }
.views .on { background: #c8c8c8; }
```
